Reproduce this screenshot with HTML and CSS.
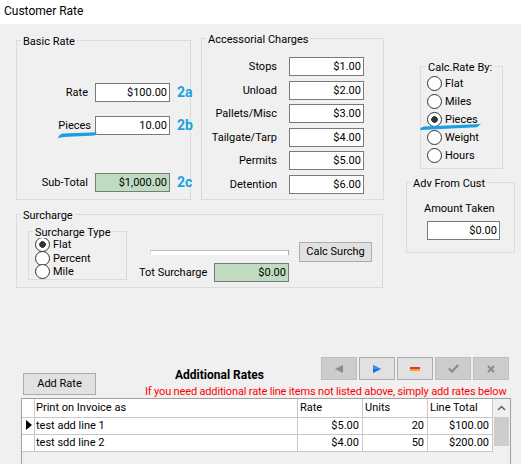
FILE: index.html
```html
<!DOCTYPE html>
<html lang="en">

<head>
    <meta charset="UTF-8">
    <meta name="viewport" content="width=device-width, initial-scale=1.0">
    <title>Customer Rate</title>
    <link rel="stylesheet" href="styles.css">
</head>

<body>
    <div class="titlebar">Customer Rate</div>

    <div class="form">
        <div class="top">
            <div class="left">
                <div class="upper">
                    <div class="group basic">
                        <span class="legend">Basic Rate</span>
                        <div class="basic-row r1">
                            <span class="lbl">Rate</span>
                            <span class="field">$100.00</span>
                            <span class="tag">2a</span>
                        </div>
                        <div class="basic-row r2">
                            <span class="lbl pieces">Pieces
                                <svg class="swoosh" viewBox="0 0 39 7"><path d="M0,6.5 Q1,2 5,1.5 L39,0.3 L36.5,3.5 L6,5 Q2,5.2 0,6.5 Z" /></svg>
                            </span>
                            <span class="field">10.00</span>
                            <span class="tag">2b</span>
                        </div>
                        <div class="basic-row r3">
                            <span class="lbl">Sub-Total</span>
                            <span class="field money">$1,000.00</span>
                            <span class="tag">2c</span>
                        </div>
                    </div>

                    <div class="group acc">
                        <span class="legend">Accessorial Charges</span>
                        <div class="acc-rows">
                            <span class="lbl">Stops</span><span class="field">$1.00</span>
                            <span class="lbl">Unload</span><span class="field">$2.00</span>
                            <span class="lbl">Pallets/Misc</span><span class="field">$3.00</span>
                            <span class="lbl">Tailgate/Tarp</span><span class="field">$4.00</span>
                            <span class="lbl">Permits</span><span class="field">$5.00</span>
                            <span class="lbl">Detention</span><span class="field">$6.00</span>
                        </div>
                    </div>
                </div>

                <div class="group surcharge">
                    <span class="legend">Surcharge</span>
                    <div class="group stype">
                        <span class="legend">Surcharge Type</span>
                        <div class="radio on">Flat</div>
                        <div class="radio">Percent</div>
                        <div class="radio">Mile</div>
                    </div>
                    <div class="mid">
                        <div class="progress"></div>
                        <div class="tot">
                            <span>Tot Surcharge</span>
                            <span class="field money">$0.00</span>
                        </div>
                    </div>
                    <div class="btn calc-surchg">Calc Surchg</div>
                </div>
            </div>

            <div class="right">
                <div class="group calc">
                    <span class="legend">Calc.Rate By:</span>
                    <div class="radio">Flat</div>
                    <div class="radio">Miles</div>
                    <div class="radio on">Pieces</div>
                    <div class="radio">Weight</div>
                    <div class="radio">Hours</div>
                    <svg class="swoosh" viewBox="0 0 61 7"><path d="M0,6.3 Q0.5,3 4,2.5 L61,0 L57,3.3 L6,5.8 Q2,6 0,6.3 Z" /></svg>
                </div>
                <div class="group adv">
                    <span class="legend">Adv From Cust</span>
                    <div class="adv-lbl">Amount Taken</div>
                    <span class="field">$0.00</span>
                </div>
            </div>
        </div>

        <div class="bottom-head">
            <div class="btn add-rate">Add Rate</div>
            <div class="head-right">
                <div class="head-top">
                    <div class="heading">Additional Rates</div>
                    <div class="nav">
                        <div class="nav-btn off">
                            <svg width="8" height="8" viewBox="0 0 8 8"><polygon points="8,0 8,8 0,4" fill="#8c8c8c" /></svg>
                        </div>
                        <div class="nav-btn">
                            <svg width="8" height="8" viewBox="0 0 8 8"><polygon points="0,0 8,4 0,8" fill="#1769dc" /><polygon points="0,0 8,4 0,4" fill="#3a8ff0" /></svg>
                        </div>
                        <div class="nav-btn">
                            <svg width="10" height="4" viewBox="0 0 10 4"><rect width="10" height="2" fill="#e4361c" /><rect y="2" width="10" height="2" fill="#f5a031" /></svg>
                        </div>
                        <div class="nav-btn off">
                            <svg width="11" height="9" viewBox="0 0 11 9"><path d="M0.8,4.5 L4,7.5 L10.2,1" fill="none" stroke="#8a8a8a" stroke-width="2.2" /></svg>
                        </div>
                        <div class="nav-btn off">
                            <svg width="8" height="8" viewBox="0 0 8 8"><path d="M1,1 L7,7 M7,1 L1,7" stroke="#8a8a8a" stroke-width="2" /></svg>
                        </div>
                    </div>
                </div>
                <div class="notice">If you need additional rate line items not listed above, simply add rates below</div>
            </div>
        </div>

        <div class="grid">
            <div class="table">
                <div class="trow head">
                    <span></span>
                    <span class="first">Print on Invoice as</span>
                    <span>Rate</span>
                    <span>Units</span>
                    <span>Line Total</span>
                </div>
                <div class="trow">
                    <span class="ind current"></span>
                    <span class="first">test add line 1</span>
                    <span class="num">$5.00</span>
                    <span class="num">20</span>
                    <span class="num">$100.00</span>
                </div>
                <div class="trow">
                    <span class="ind"></span>
                    <span class="first">test sdd line 2</span>
                    <span class="num">$4.00</span>
                    <span class="num">50</span>
                    <span class="num">$200.00</span>
                </div>
            </div>
            <div class="vscroll">
                <div class="vs-up">
                    <svg width="9" height="6" viewBox="0 0 9 6"><path d="M1,5 L4.5,1.5 L8,5" fill="none" stroke="#606060" stroke-width="1.5" /></svg>
                </div>
                <div class="vs-thumb"></div>
            </div>
        </div>
    </div>
</body>
</html>
```

FILE: styles.css
```css
* {
    margin: 0;
    padding: 0;
    box-sizing: border-box;
}

body {
    width: 521px;
    height: 464px;
    overflow: hidden;
    background-color: white;
    font-family: Roboto, "Noto Sans", sans-serif;
    font-size: 11px;
    color: black;
}

.titlebar {
    height: 24px;
    padding-left: 4px;
    font-size: 12px;
    line-height: 22px;
}

.form {
    height: 440px;
    background-color: #f0f0f0;
}

.top {
    display: flex;
    align-items: flex-start;
    padding-left: 16px;
}

.left {
    width: 368px;
}

.upper {
    display: flex;
    align-items: flex-end;
    gap: 10px;
    margin-top: 14px;
}

/* group boxes */
.group {
    position: relative;
    border: 1px solid #dcdcdc;
}

.legend {
    position: absolute;
    top: -6px;
    left: 4px;
    padding: 0 2px;
    line-height: 13px;
    white-space: nowrap;
    background-color: #f0f0f0;
}

.field {
    display: block;
    width: 75px;
    height: 19px;
    border: 1px solid #7a7a7a;
    background-color: white;
    text-align: right;
    padding-right: 2px;
    line-height: 17px;
}

.field.money {
    background-color: #c0dcc0;
}

.lbl {
    text-align: right;
    line-height: 19px;
    white-space: nowrap;
}

.swoosh {
    position: absolute;
    fill: #1b9fe0;
}

/* basic rate */
.basic {
    width: 175px;
    height: 160px;
}

.basic-row {
    display: grid;
    grid-template-columns: 71px 75px auto;
    column-gap: 7px;
    align-items: center;
    height: 19px;
}

.basic-row.r1 {
    margin-top: 42px;
}

.basic-row.r2 {
    margin-top: 14px;
}

.basic-row.r3 {
    margin-top: 38px;
}

.tag {
    font-weight: bold;
    font-size: 14px;
    line-height: 19px;
    color: #1ba1e2;
}

.pieces {
    position: relative;
    margin-right: -3px;
}

.pieces .swoosh {
    left: 41px;
    top: 16px;
    width: 39px;
    height: 7px;
}

/* accessorial */
.acc {
    width: 183px;
    height: 162px;
}

.acc-rows {
    display: grid;
    grid-template-columns: 75px 75px;
    column-gap: 12px;
    row-gap: 4.6px;
    margin-top: 18px;
}

/* radios */
.radio {
    display: flex;
    align-items: center;
    white-space: nowrap;
}

.radio::before {
    content: "";
    flex: none;
    width: 13px;
    height: 13px;
    margin-right: 3px;
    border: 1px solid #333;
    border-radius: 50%;
    background-color: white;
}

.radio.on::before {
    background: radial-gradient(circle, #333 0 3px, white 3.6px);
}

/* surcharge */
.surcharge {
    display: flex;
    align-items: flex-start;
    width: 367px;
    height: 74px;
    margin-top: 14px;
}

.stype {
    width: 99px;
    height: 49px;
    margin: 16px 0 0 11px;
    padding: 6px 0 0 6px;
}

.stype .legend {
    top: -5px;
    line-height: 11px;
}

.stype .radio {
    height: 13.4px;
}

.mid {
    width: 150px;
    margin-left: 12px;
}

.progress {
    width: 139px;
    height: 5px;
    margin: 35px 0 0 11px;
    background-color: white;
    border-top: 1px solid #bcbcbc;
    border-left: 1px solid #dedede;
    border-right: 1px solid #a8a8a8;
}

.tot {
    display: flex;
    align-items: center;
    justify-content: space-between;
    margin-top: 8px;
}

.btn {
    background-color: #e1e1e1;
    border: 1px solid #adadad;
    text-align: center;
}

.calc-surchg {
    width: 73px;
    height: 20px;
    line-height: 18px;
    margin: 27px 0 0 10px;
}

/* right column */
.calc {
    width: 83px;
    height: 103px;
    margin: 42px 0 0 36px;
    padding: 7px 0 0 6px;
}

.calc .legend {
    left: 5px;
}

.calc .radio {
    height: 18.2px;
}

.calc .swoosh {
    left: -1px;
    top: 57px;
    width: 61px;
    height: 7px;
}

.adv {
    width: 109px;
    height: 71px;
    margin: 13px 0 0 22px;
    padding: 19px 0 0 17px;
}

.adv-lbl {
    line-height: 13px;
}

.adv .field {
    width: 73px;
    margin: 6px 0 0 3px;
}

/* additional rates */
.bottom-head {
    display: flex;
    align-items: flex-end;
    padding-left: 23px;
    margin-top: 69px;
}

.add-rate {
    flex: none;
    width: 73px;
    height: 22px;
    line-height: 20px;
    margin-bottom: 3px;
}

.head-right {
    flex: 1;
    margin-left: 49px;
}

.head-top {
    display: flex;
    align-items: flex-end;
    height: 23px;
}

.heading {
    font-weight: bold;
    font-size: 12px;
    line-height: 14px;
    margin: 0 0 -2px 30px;
}

.nav {
    display: flex;
    gap: 2px;
    margin-left: auto;
    margin-right: 12px;
}

.nav-btn {
    display: flex;
    align-items: center;
    justify-content: center;
    width: 36px;
    height: 23px;
    background-color: #e1e1e1;
    border: 1px solid #adadad;
}

.nav-btn.off {
    background-color: #cccccc;
    border-color: #bfbfbf;
}

.notice {
    color: #ff0000;
    line-height: 13px;
    letter-spacing: -0.16px;
    margin-top: 5px;
    white-space: nowrap;
}

/* grid */
.grid {
    display: flex;
    width: 490px;
    height: 66px;
    margin-left: 21px;
    border: 1px solid #a0a0a0;
    border-bottom: none;
    background-color: #f0f0f0;
}

.table {
    width: 471px;
}

.trow {
    display: grid;
    grid-template-columns: 13px 263px 65px 65px 65px;
    height: 17px;
    border-bottom: 1px solid #c8c8c8;
    background-color: white;
}

.trow.head {
    height: 19px;
}

.trow span {
    border-right: 1px solid #c8c8c8;
    padding: 0 3px 0 2px;
    line-height: 16px;
    white-space: nowrap;
    overflow: hidden;
}

.trow.head span {
    line-height: 18px;
}

.trow .first {
    padding-left: 1px;
}

.num {
    text-align: right;
}

.ind.current::before {
    content: "";
    display: block;
    width: 0;
    height: 0;
    margin: 2px 0 0 2px;
    border-left: 6px solid black;
    border-top: 5.5px solid transparent;
    border-bottom: 5.5px solid transparent;
}

.vscroll {
    width: 17px;
}

.vs-up {
    display: flex;
    align-items: center;
    justify-content: center;
    height: 17px;
}

.vs-thumb {
    width: 15px;
    height: 29px;
    margin: 1px 0 0 1px;
    background-color: #cdcdcd;
}
```
